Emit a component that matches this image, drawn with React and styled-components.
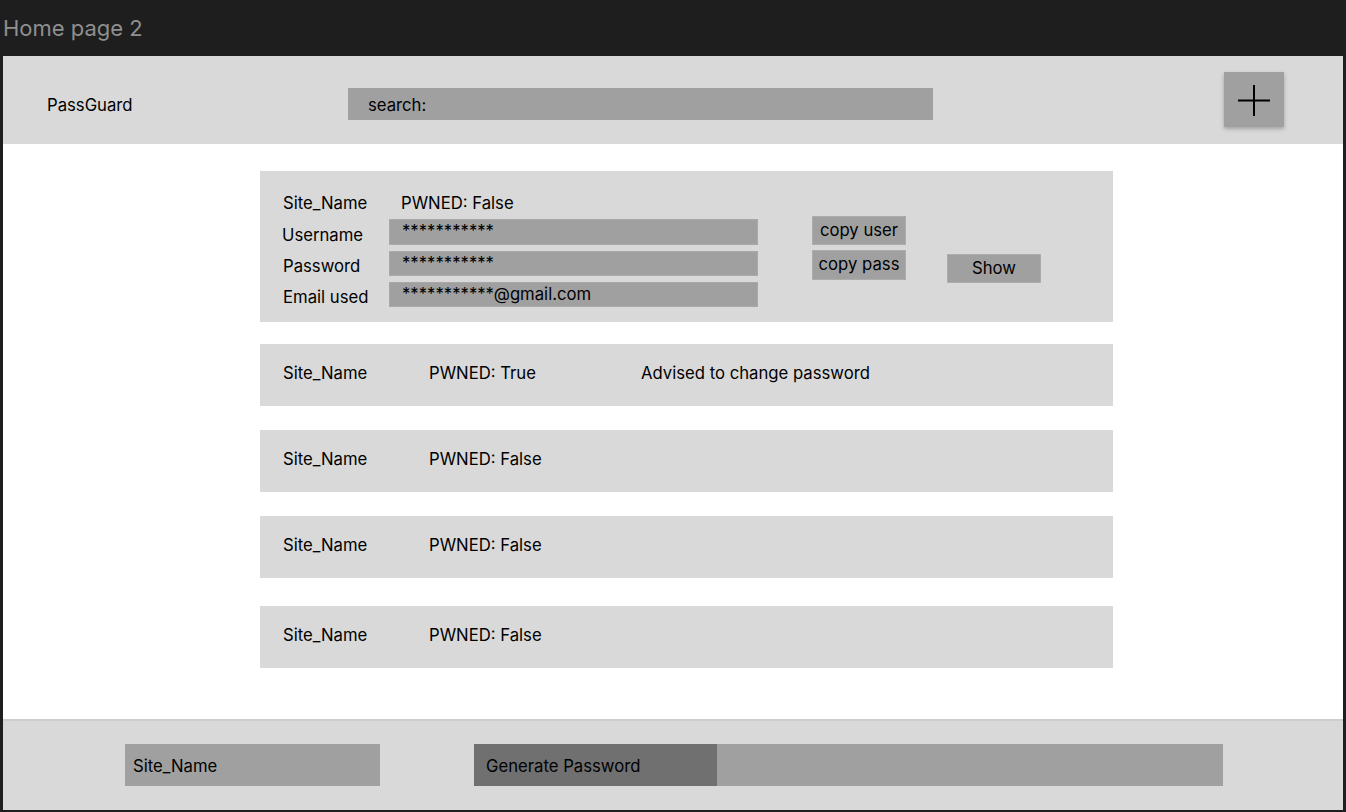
import React from 'react';
import styled, { createGlobalStyle } from 'styled-components';

const GlobalStyle = createGlobalStyle`
  html, body {
    margin: 0;
    padding: 0;
    background-color: #1e1e1e;
    font-family: Inter, "Noto Sans", sans-serif;
  }
`;

let Page = styled.div`
  width: 1346px;
  height: 812px;
  display: flex;
  flex-direction: column;
  background-color: #1e1e1e;
`;

let TitleBar = styled.div`
  height: 56px;
  display: flex;
  align-items: center;
  padding-left: 3px;
  font-size: 22px;
  color: #8f8f8f;
  box-sizing: border-box;
  padding-bottom: 1px;
`;

let Frame = styled.div`
  margin: 0 3px;
  width: 1340px;
  height: 754px;
  display: flex;
  flex-direction: column;
  background-color: #ffffff;
`;

let Header = styled.div`
  height: 88px;
  display: flex;
  align-items: flex-start;
  padding: 16px 0 0 44px;
  box-sizing: border-box;
  background-color: #d9d9d9;
`;

let Brand = styled.div`
  margin-top: 23px;
  width: 301px;
  font-size: 16.7px;
  line-height: 20px;
  color: #000;
`;

let Search = styled.div`
  margin-top: 16px;
  width: 585px;
  height: 32px;
  display: flex;
  align-items: center;
  padding: 1px 0 0 20px;
  box-sizing: border-box;
  background-color: #a0a0a0;
  font-size: 16.7px;
  color: #000;
`;

let AddButton = styled.button`
  margin-left: 291px;
  width: 60px;
  height: 55px;
  padding: 0;
  border: none;
  display: flex;
  align-items: center;
  justify-content: center;
  background-color: #a0a0a0;
  box-shadow: 0 2px 4px rgba(0, 0, 0, 0.25);
  cursor: pointer;
`;

let Main = styled.div`
  flex: 1;
  display: flex;
  flex-direction: column;
  padding: 27px 0 0 257px;
  box-sizing: border-box;
`;

let Card = styled.div`
  width: 853px;
  margin-top: ${props => props.$mt || 0}px;
  background-color: #d9d9d9;
  box-sizing: border-box;
`;

let OpenCard = styled(Card)`
  display: flex;
  align-items: flex-start;
  padding: 22px 0 15px 23px;
`;

let FieldGrid = styled.div`
  display: grid;
  grid-template-columns: 106px 369px;
  grid-template-rows: 20px 26px 25px 25px;
  row-gap: 6px;
  align-items: center;
  font-size: 16.7px;
  color: #000;
`;

let Label = styled.div`
  line-height: 20px;
  margin-left: ${props => props.$ml || 0}px;
  margin-top: ${props => props.$mt || 0}px;
`;

let Value = styled.div`
  padding-left: 12px;
  line-height: 20px;
`;

let Field = styled.div`
  height: 100%;
  display: flex;
  align-items: center;
  padding: 0 0 2px 12px;
  box-sizing: border-box;
  background-color: #a0a0a0;
  border: 1px solid #a8a8a8;
  line-height: 20px;
`;

let CopyColumn = styled.div`
  margin: 23px 0 0 54px;
  display: flex;
  flex-direction: column;
  gap: 5px;
`;

let SmallButton = styled.button`
  width: 94px;
  height: ${props => props.$h || 29}px;
  margin-top: ${props => props.$mt || 0}px;
  margin-left: ${props => props.$ml || 0}px;
  padding: 0 0 2px 0;
  background-color: #a0a0a0;
  border: 1px solid #acacac;
  font-family: Inter, "Noto Sans", sans-serif;
  font-size: 16.7px;
  color: #000;
  cursor: pointer;
`;

let RowCard = styled(Card)`
  height: 62px;
  display: grid;
  grid-template-columns: 146px 212px auto;
  align-items: flex-start;
  padding: 19px 0 0 23px;
  font-size: 16.7px;
  line-height: 20px;
  color: #000;
`;

let Footer = styled.div`
  height: 91px;
  display: flex;
  align-items: flex-start;
  padding: 23px 0 0 122px;
  box-sizing: border-box;
  border-top: 2px solid #cdcdcd;
  background-color: #d9d9d9;
`;

let SiteInput = styled.div`
  width: 255px;
  height: 42px;
  display: flex;
  align-items: center;
  padding: 2px 0 0 8px;
  box-sizing: border-box;
  background-color: #a0a0a0;
  font-size: 16.7px;
  color: #000;
`;

let GenerateBar = styled.div`
  margin-left: 94px;
  width: 749px;
  height: 42px;
  display: flex;
  background-color: #a0a0a0;
`;

let GenerateButton = styled.div`
  width: 243px;
  display: flex;
  align-items: center;
  padding: 2px 0 0 12px;
  box-sizing: border-box;
  background-color: #707070;
  font-size: 16.7px;
  color: #000;
`;

const PlusIcon = () => (
  <svg width="34" height="34" viewBox="0 0 34 34">
    <path d="M17 2 V33 M1 17.5 H33" stroke="#000" strokeWidth="2" fill="none" />
  </svg>
);

const entries = [
  { pwned: 'True', note: 'Advised to change password', mt: 22 },
  { pwned: 'False', mt: 24 },
  { pwned: 'False', mt: 24 },
  { pwned: 'False', mt: 28 },
];

export default function App() {
  return (
    <>
      <GlobalStyle />
      <Page>
        <TitleBar>Home page 2</TitleBar>
        <Frame>
          <Header>
            <Brand>PassGuard</Brand>
            <Search>search:</Search>
            <AddButton aria-label="add">
              <PlusIcon />
            </AddButton>
          </Header>
          <Main>
            <OpenCard>
              <FieldGrid>
                <Label>Site_Name</Label>
                <Value>PWNED: False</Value>
                <Label $ml={-1} $mt={6}>Username</Label>
                <Field>***********</Field>
                <Label $mt={4}>Password</Label>
                <Field>***********</Field>
                <Label $mt={5}>Email used</Label>
                <Field>***********@gmail.com</Field>
              </FieldGrid>
              <CopyColumn>
                <SmallButton>copy user</SmallButton>
                <SmallButton $h={30}>copy pass</SmallButton>
              </CopyColumn>
              <SmallButton $mt={61} $ml={41}>Show</SmallButton>
            </OpenCard>
            {entries.map((entry, i) => (
              <RowCard key={i} $mt={entry.mt}>
                <div>Site_Name</div>
                <div>PWNED: {entry.pwned}</div>
                <div>{entry.note}</div>
              </RowCard>
            ))}
          </Main>
          <Footer>
            <SiteInput>Site_Name</SiteInput>
            <GenerateBar>
              <GenerateButton>Generate Password</GenerateButton>
            </GenerateBar>
          </Footer>
        </Frame>
      </Page>
    </>
  );
}
